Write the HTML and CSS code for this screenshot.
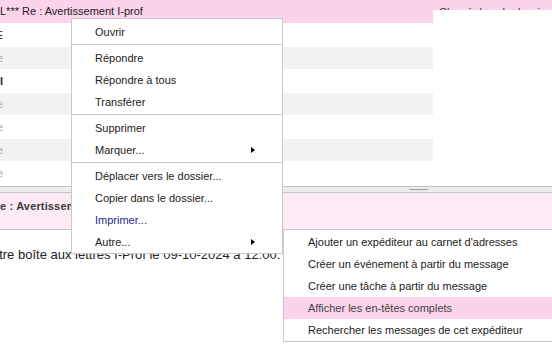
FILE: index.html
```html
<!DOCTYPE html>
<html>
<head>
    <meta charset="UTF-8">
    <title>Messagerie</title>
    <link rel="stylesheet" href="styles.css">
</head>
<body>
    <div class="app">
        <div class="list">
            <div class="list-head">
                <div class="col-subject">L*** Re : Avertissement I-prof</div>
                <div class="col-side">Classé dans le dossier</div>
            </div>
            <div class="row tall"><div class="edge dark">E</div></div>
            <div class="row alt"><div class="edge">e</div></div>
            <div class="row tall"><div class="edge dark bold">l</div></div>
            <div class="row alt"><div class="edge">e</div></div>
            <div class="row tall"><div class="edge">e</div></div>
            <div class="row alt"><div class="edge">e</div></div>
            <div class="row tall"><div class="edge">e</div></div>
        </div>
        <div class="side-panel"></div>

        <div class="splitter"><div class="grip"></div></div>

        <div class="preview-head">
            <div class="preview-subject">Re : Avertissement I-prof</div>
        </div>
        <div class="preview-body">
            <p>Votre boîte aux lettres I-Prof le 09-10-2024 à 12:00.</p>
        </div>

        <!-- menu contextuel -->
        <div class="menu">
            <div class="item">Ouvrir</div>
            <div class="sep"></div>
            <div class="item">Répondre</div>
            <div class="item">Répondre à tous</div>
            <div class="item">Transférer</div>
            <div class="sep"></div>
            <div class="item">Supprimer</div>
            <div class="item">Marquer... <span class="arrow"></span></div>
            <div class="sep"></div>
            <div class="item">Déplacer vers le dossier...</div>
            <div class="item">Copier dans le dossier...</div>
            <div class="item link">Imprimer...</div>
            <div class="item">Autre... <span class="arrow"></span></div>
        </div>

        <div class="submenu">
            <div class="item">Ajouter un expéditeur au carnet d'adresses</div>
            <div class="item">Créer un événement à partir du message</div>
            <div class="item">Créer une tâche à partir du message</div>
            <div class="item hover">Afficher les en-têtes complets</div>
            <div class="item">Rechercher les messages de cet expéditeur</div>
        </div>
    </div>
</body>
</html>
```

FILE: styles.css
```css
body {
    margin: 0;
    font-family: "Liberation Sans", Arial, sans-serif;
    font-size: 11px;
    color: #222;
    background-color: #fff;
    overflow: hidden;
}
.app {
    width: 552px;
    height: 351px;
    position: relative;
    overflow: hidden;
}
.list {
    height: 185px;
}
.list-head {
    display: flex;
    height: 23px;
    line-height: 23px;
    background-color: #fbd3eb;
    white-space: nowrap;
}
.col-subject {
    width: 433px;
    color: #222;
}
.col-side {
    padding: 1px 0 0 6px;
    color: #333;
}
.row {
    width: 433px;
    height: 22px;
    display: flex;
}
.row.tall {
    height: 24px;
}
.row.alt {
    background-color: #f2f2f2;
}
.edge {
    width: 3px;
    overflow: hidden;
    display: flex;
    justify-content: flex-end;
    align-items: center;
    color: #aaa;
}
.edge.dark { color: #222; }
.edge.bold { font-weight: bold; }
.side-panel {
    position: absolute;
    left: 433px;
    top: 10px;
    width: 119px;
    height: 175px;
    background-color: #fff;
}
.splitter {
    margin-top: 1px;
    height: 5px;
    background-color: #ececec;
    border-top: 1px solid #c4c4c4;
    border-bottom: 1px solid #c4c4c4;
}
.grip {
    margin: 2px 0 0 409px;
    width: 19px;
    height: 1px;
    background-color: #a0a0a0;
}
.preview-head {
    height: 36px;
    background-color: #fdeaf5;
    border-bottom: 1px solid #c4c4c4;
}
.preview-subject {
    margin-left: -8px;
    padding-top: 6px;
    line-height: 14px;
    font-weight: bold;
    letter-spacing: 0.15px;
    color: #3a3a3a;
    white-space: nowrap;
}
.preview-body {
    padding-top: 17px;
}
.preview-body p {
    margin: 0 0 0 -16px;
    font-size: 13px;
    line-height: 16px;
    color: #222;
    white-space: nowrap;
}
.menu {
    position: absolute;
    left: 71px;
    top: 18px;
    width: 210px;
    padding-top: 2px;
    background-color: #fff;
    border: 1px solid #c8c8c8;
}
.menu .item {
    height: 22px;
    line-height: 22px;
    padding-left: 23px;
    display: flex;
    justify-content: space-between;
    align-items: center;
}
.menu .item.link {
    color: #1f2a8c;
}
.arrow {
    width: 0;
    height: 0;
    margin-right: 27px;
    border-left: 4px solid #000;
    border-top: 3.5px solid transparent;
    border-bottom: 3.5px solid transparent;
}
.sep {
    height: 1px;
    margin: 1px 0 2px;
    background-color: #c8c8c8;
}
.submenu {
    position: absolute;
    left: 283px;
    top: 229px;
    width: 280px;
    padding-top: 1px;
    background-color: #fff;
    border: 1px solid #c8c8c8;
}
.submenu .item {
    height: 22px;
    line-height: 22px;
    padding-left: 24px;
    white-space: nowrap;
}
.submenu .item.hover {
    background-color: #fbd3eb;
    color: #444;
}
```
